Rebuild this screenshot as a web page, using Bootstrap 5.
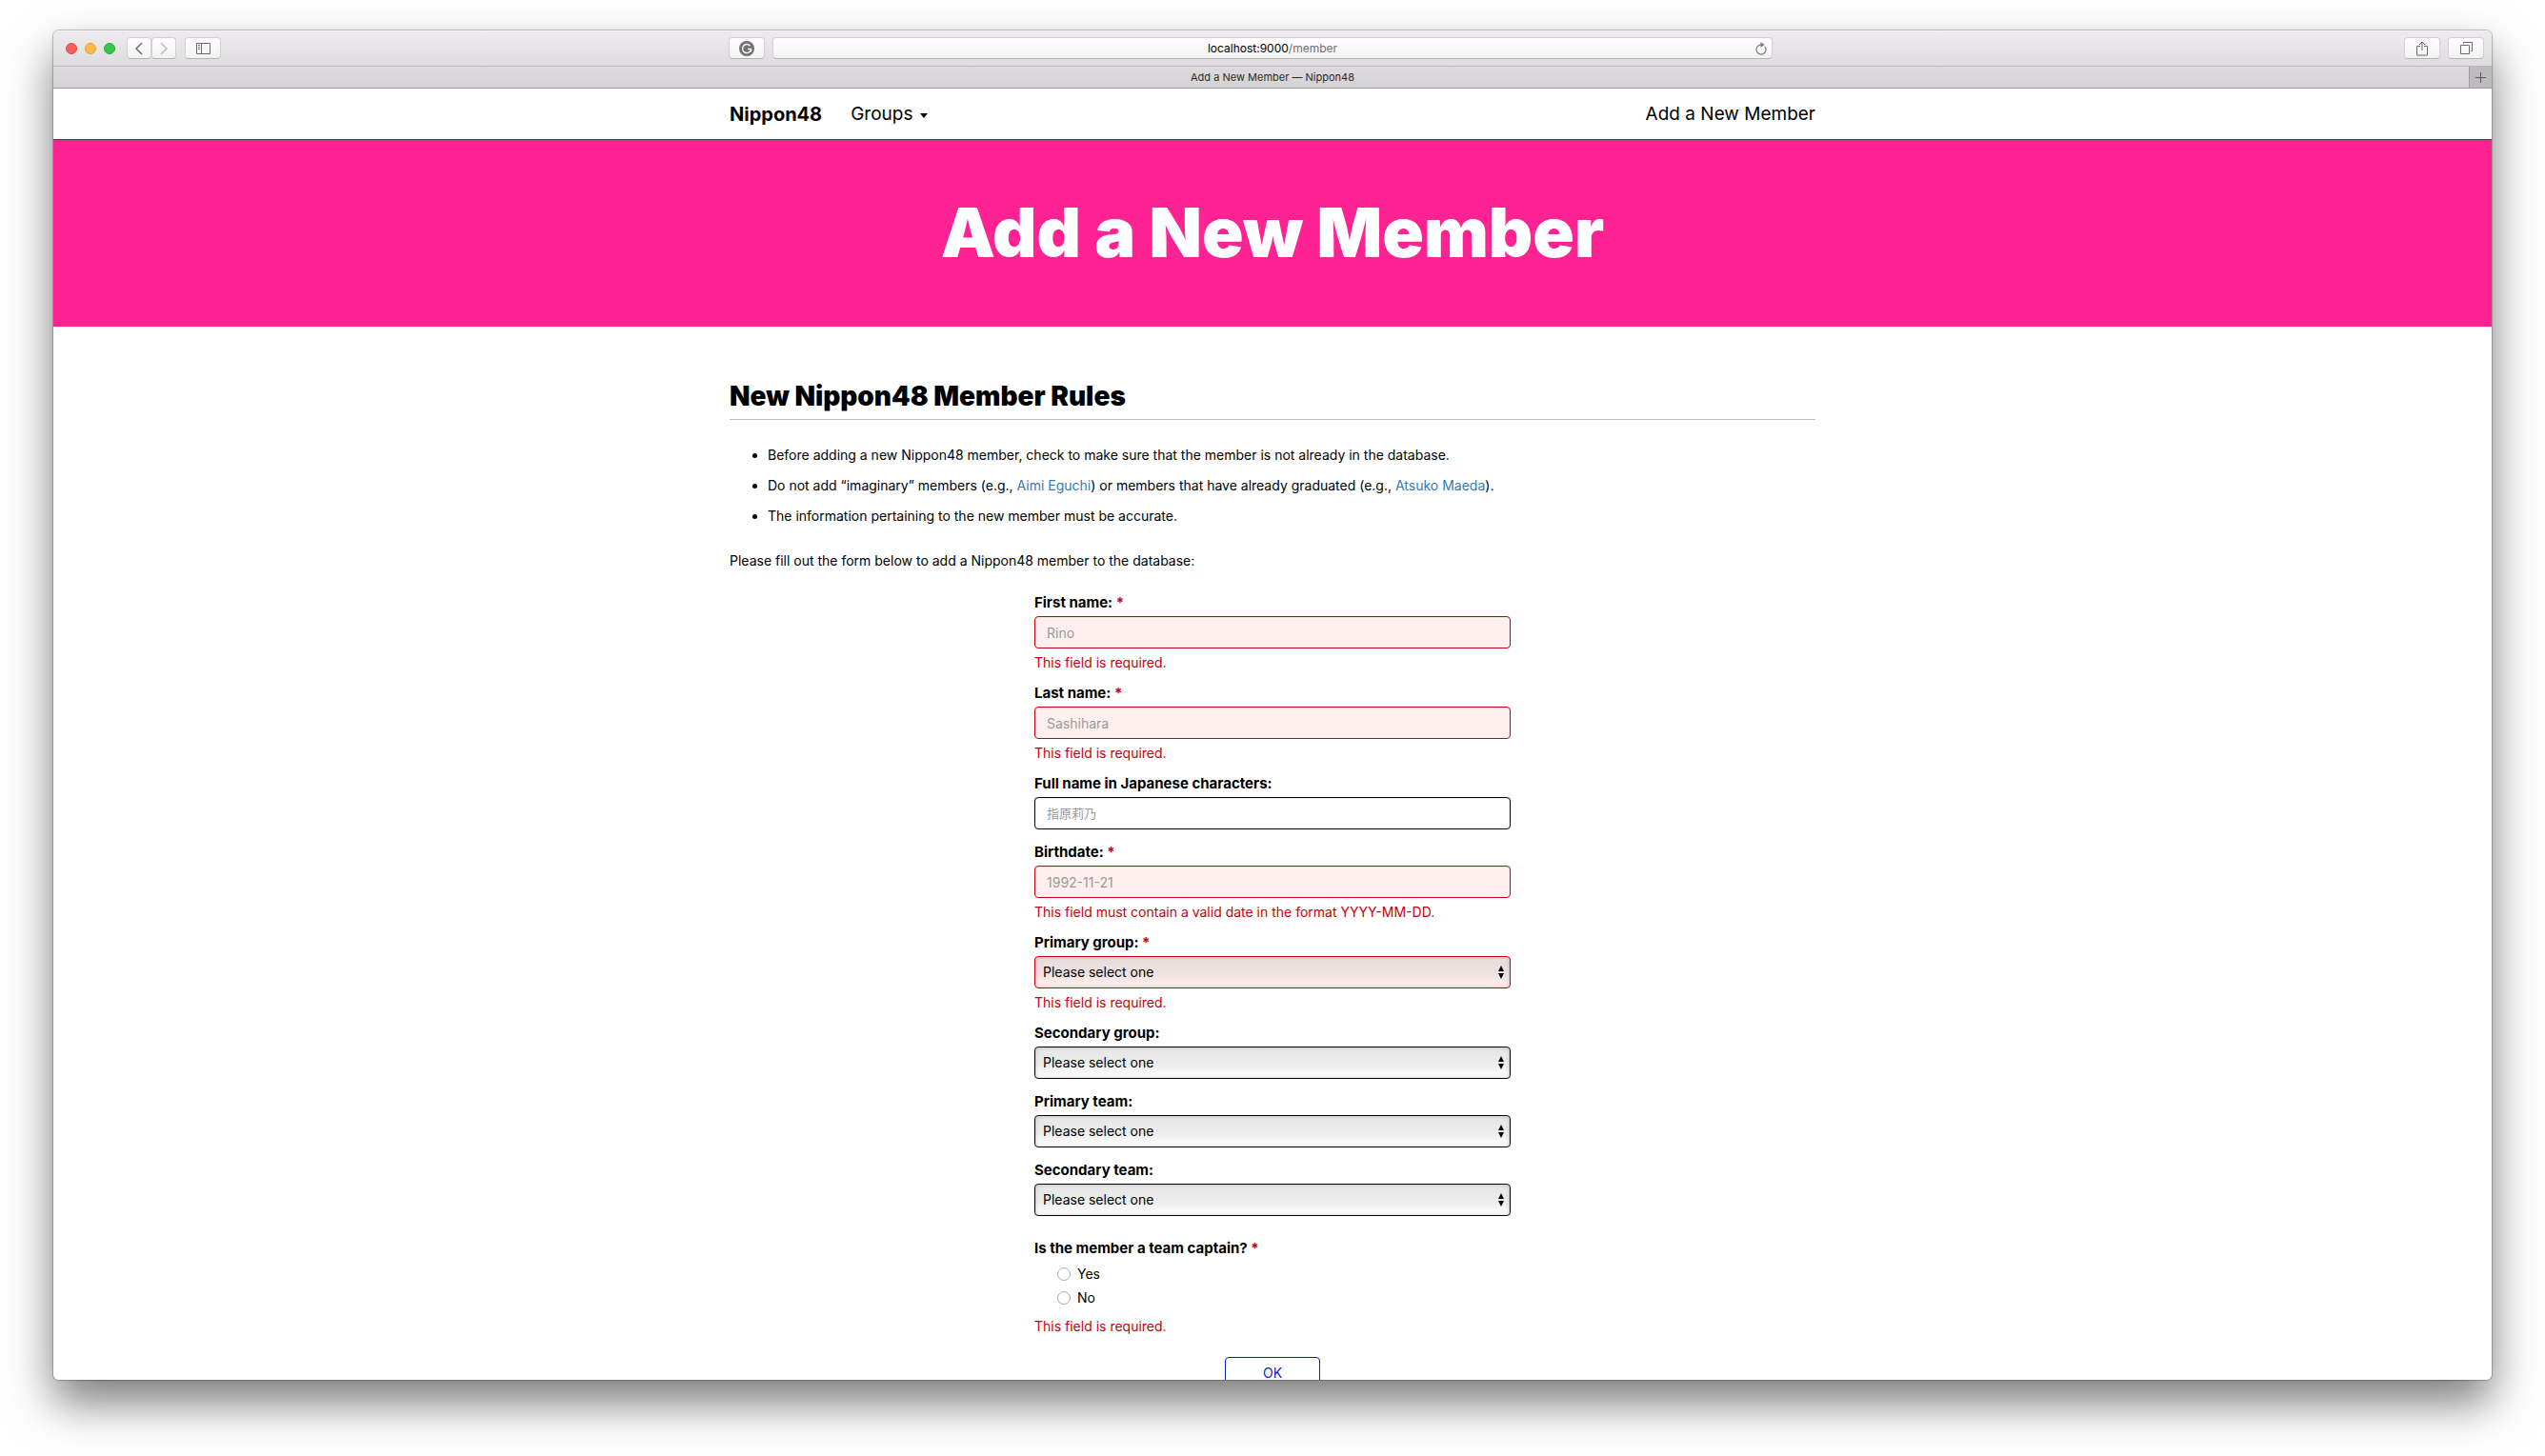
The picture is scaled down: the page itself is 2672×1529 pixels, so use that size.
<!DOCTYPE html>
<html lang="en">
<head>
<meta charset="utf-8">
<meta name="viewport" content="width=device-width, initial-scale=1">
<title>Add a New Member — Nippon48</title>
<link href="https://cdn.jsdelivr.net/npm/bootstrap@5.3.0/dist/css/bootstrap.min.css" rel="stylesheet">
<style>
  body { font-family: Inter, "Noto Sans CJK JP", sans-serif; font-size: 14px; line-height: 20px; color: #000; background: #fff; padding: 32px 56px 80px; }
  .browser { border-radius: 6px; box-shadow: 0 0 1px 1px rgba(0,0,0,.25), 0 24px 48px rgba(0,0,0,.52); }
  .toolbar { height: 38px; padding: 0 8px; background: linear-gradient(#edebee, #dedcdf); border-bottom: 1px solid #b9b7ba; box-shadow: inset 0 1px #f6f5f7; }
  .toolbar-start { padding-left: 5px; }
  .light { width: 12px; height: 12px; border: 1px solid; }
  .light-close { background: #fc605b; border-color: #df4744; }
  .light-min { background: #fdbc40; border-color: #de9f34; }
  .light-max { background: #34c84a; border-color: #27aa35; }
  .history { margin: 0 9px 0 12px; }
  .tool { height: 23px; width: 38px; border: 1px solid #d2d0d3; border-bottom-color: #b5b3b6; border-radius: 4px; background: linear-gradient(#fff, #f2f2f2); color: #6a6a6a; }
  .tool-sm { width: 26px; }
  .address { flex: 0 0 41.3%; height: 23px; font-size: 12px; border: 1px solid #d2d0d3; border-bottom-color: #b5b3b6; border-radius: 4px; background: linear-gradient(#fff, #f2f2f2); }
  .address-path { color: #6f6f6f; }
  .reload { right: 4px; color: #7a7a7a; }
  .tabstrip { height: 23px; font-size: 11px; background: linear-gradient(#dcdadd, #d5d3d6); border-bottom: 1px solid #9d9b9e; color: #2a2a2a; }
  .tab-title { padding-left: 24px; }
  .new-tab { width: 24px; background: #bdbbbe; border: 0; border-left: 1px solid #9d9b9e; color: #5a5a5a; }
  .viewport { min-height: 0; overflow-y: auto; scrollbar-width: none; }
  .viewport::-webkit-scrollbar { display: none; }
  .page { max-width: 1140px; margin: 0 auto; }
  .site-nav { height: 54px; border-bottom: 1px solid #454545; font-size: 19px; line-height: 24px; }
  .site-nav a { color: #000; text-decoration: none; }
  .site-nav .brand { font-size: 20px; }
  .nav-gap { margin-left: 30px; }
  .groups-toggle::after { margin-left: 8px; border-top-width: 5px; border-left-width: 4px; border-right-width: 4px; vertical-align: 2px; }
  .hero { height: 196px; background: #ff2292; color: #fff; font-weight: 900; font-size: 72px; line-height: 194px; margin: 0; }
  .rules-title { font-weight: 900; font-size: 28px; line-height: 34px; padding-bottom: 7px; margin: 56px 0 21px; border-bottom: 1px solid #bdbdbd; }
  .rules { padding-left: 40px; margin-bottom: 21px; line-height: 32px; }
  .rules a { color: #337ab7; text-decoration: none; }
  .member-form { max-width: 500px; margin: 24px auto 0; }
  .field { margin-bottom: 14px; }
  .field-bad { margin-bottom: 12px; }
  .field-label { display: block; font-weight: 700; margin-bottom: 4px; font-size: 15px; float: none; line-height: 20px; }
  .req, .error { color: #c5000f; }
  .error { margin: 5px 0 0; }
  .form-control, .form-select { height: 34px; border: 1px solid #000; border-radius: 4px; font-size: 14px; line-height: 20px; padding: 6px 12px; color: #000; box-shadow: inset 0 1px 1px rgba(0,0,0,.075); }
  .form-control::placeholder { color: #999; }
  .form-control:lang(ja) { font-size: 13px; }
  .form-select { padding: 6px 8px; background: url("data:image/svg+xml,%3Csvg xmlns='http://www.w3.org/2000/svg' width='8' height='14'%3E%3Cpath d='M1 6L4 0L7 6ZM1 8L4 14L7 8Z'/%3E%3C/svg%3E") no-repeat right 5px center, linear-gradient(#e6e6e6, #ececec 55%, #fff); background-size: 8px 14px, auto; box-shadow: inset 0 0 4px rgba(0,0,0,.2); }
  .field-bad .form-control { background: #ffefee; border-color: #c5000f; }
  .field-bad .form-select { border-color: #c5000f; background-image: url("data:image/svg+xml,%3Csvg xmlns='http://www.w3.org/2000/svg' width='8' height='14'%3E%3Cpath d='M1 6L4 0L7 6ZM1 8L4 14L7 8Z'/%3E%3C/svg%3E"), linear-gradient(#e8dedd, #eee1e0 55%, #fff2f1); }
  .captain { margin-top: 24px; }
  .choices { padding-left: 24px; }
  .choice { height: 25px; }
  .choice input { appearance: none; width: 14px; height: 14px; margin: 0 7px 0 0; border: 1px solid #aaa; border-radius: 50%; background: #fff; }
  .choice input:checked { background: #0a1fc4; }
  .choices-error { margin-top: 8px; }
  .ok-btn { width: 100px; height: 34px; border: 1px solid #0a1fc4; border-radius: 4px; background: #fff; color: #0a1fc4; margin: 22px auto 40px; }
</style>
</head>
<body class="d-flex flex-column vh-100">
<div class="browser d-flex flex-column flex-grow-1 overflow-hidden">
  <div class="toolbar d-flex align-items-center flex-shrink-0">
    <div class="toolbar-start d-flex align-items-center flex-fill w-25">
      <div class="d-flex gap-2">
        <span class="light light-close rounded-circle"></span>
        <span class="light light-min rounded-circle"></span>
        <span class="light light-max rounded-circle"></span>
      </div>
      <div class="history d-flex">
        <button class="tool tool-sm d-flex align-items-center justify-content-center p-0" type="button" aria-label="Back"><svg width="8" height="14" viewBox="0 0 8 14" fill="none" stroke="currentColor" stroke-width="1.5"><path d="M7 1L1 7l6 6"/></svg></button>
        <button class="tool tool-sm d-flex align-items-center justify-content-center p-0" type="button" aria-label="Forward"><svg width="8" height="14" viewBox="0 0 8 14" fill="none" stroke="#bcbcbc" stroke-width="1.5"><path d="M1 1l6 6-6 6"/></svg></button>
      </div>
      <button class="tool d-flex align-items-center justify-content-center p-0" type="button" aria-label="Sidebar"><svg width="15" height="12" viewBox="0 0 15 12" fill="none" stroke="currentColor"><path d="M.5.5h14v11H.5zM5.500.5v11M2 2.500h2M2 4.500h2M2 6.500h2"/></svg></button>
      <button class="tool d-flex align-items-center justify-content-center p-0 ms-auto me-2" type="button" aria-label="Grammar check"><svg width="16" height="16" viewBox="0 0 16 16" fill="none"><circle cx="8" cy="8" r="8" fill="#727272"/><path d="M11.500 5.200A4.500 4.500 0 1 0 12.500 8.500H9M12.500 8.500v3" stroke="#f8f8f8" stroke-width="1.400"/></svg></button>
    </div>
    <div class="address position-relative d-flex align-items-center justify-content-center">
      <span>localhost:9000<span class="address-path">/member</span></span>
      <button class="reload position-absolute btn p-0 border-0 lh-1 d-flex" type="button" aria-label="Reload"><svg width="14" height="14" viewBox="0 0 14 14" fill="none" stroke="currentColor" stroke-width="1.200"><path d="M10.800 4.800A5 5 0 1 1 7 3"/><path d="M6.500 0l4 3-4 3z" fill="currentColor" stroke="none"/></svg></button>
    </div>
    <div class="d-flex align-items-center justify-content-end flex-fill w-25">
      <button class="tool d-flex align-items-center justify-content-center p-0 me-2" type="button" aria-label="Share"><svg width="12" height="16" viewBox="0 0 12 16" fill="none" stroke="currentColor"><path d="M4 5.500H.5v9.500h11V5.500H8M6 10V1M3 4l3-3 3 3"/></svg></button>
      <button class="tool d-flex align-items-center justify-content-center p-0" type="button" aria-label="Show all tabs"><svg width="13" height="13" viewBox="0 0 13 13" fill="none" stroke="currentColor"><path d="M.5 3.500h9v9h-9zM3.500 2V.5h9v9H11"/></svg></button>
    </div>
  </div>
  <div class="tabstrip d-flex flex-shrink-0">
    <div class="tab-title flex-grow-1 d-flex align-items-center justify-content-center">Add a New Member — Nippon48</div>
    <button class="new-tab d-flex align-items-center justify-content-center p-0" type="button" aria-label="New tab"><svg width="11" height="11" viewBox="0 0 11 11" stroke="currentColor"><path d="M5.500 0v11M0 5.500h11"/></svg></button>
  </div>
  <div class="viewport flex-grow-1 bg-white">
    <nav class="site-nav">
      <div class="page d-flex align-items-center h-100">
        <a href="#" class="brand fw-bold">Nippon48</a>
        <a href="#" class="nav-gap dropdown-toggle groups-toggle" data-bs-toggle="dropdown">Groups</a>
        <a href="#" class="ms-auto">Add a New Member</a>
      </div>
    </nav>
    <h1 class="hero text-center">Add a New Member</h1>
    <main class="page">
      <h2 class="rules-title">New Nippon48 Member Rules</h2>
      <ul class="rules">
        <li>Before adding a new Nippon48 member, check to make sure that the member is not already in the database.</li>
        <li>Do not add “imaginary” members (e.g., <a href="#">Aimi Eguchi</a>) or members that have already graduated (e.g., <a href="#">Atsuko Maeda</a>).</li>
        <li>The information pertaining to the new member must be accurate.</li>
      </ul>
      <p class="mb-0">Please fill out the form below to add a Nippon48 member to the database:</p>
      <form class="member-form">
        <div class="field field-bad">
          <label class="field-label" for="first">First name: <span class="req">*</span></label>
          <input class="form-control" id="first" type="text" placeholder="Rino">
          <p class="error">This field is required.</p>
        </div>
        <div class="field field-bad">
          <label class="field-label" for="last">Last name: <span class="req">*</span></label>
          <input class="form-control" id="last" type="text" placeholder="Sashihara">
          <p class="error">This field is required.</p>
        </div>
        <div class="field">
          <label class="field-label" for="japanese">Full name in Japanese characters:</label>
          <input class="form-control" id="japanese" type="text" lang="ja" placeholder="指原莉乃">
        </div>
        <div class="field field-bad">
          <label class="field-label" for="birth">Birthdate: <span class="req">*</span></label>
          <input class="form-control" id="birth" type="text" placeholder="1992-11-21">
          <p class="error">This field must contain a valid date in the format YYYY-MM-DD.</p>
        </div>
        <div class="field field-bad">
          <label class="field-label" for="group1">Primary group: <span class="req">*</span></label>
          <select class="form-select" id="group1"><option>Please select one</option></select>
          <p class="error">This field is required.</p>
        </div>
        <div class="field">
          <label class="field-label" for="group2">Secondary group:</label>
          <select class="form-select" id="group2"><option>Please select one</option></select>
        </div>
        <div class="field">
          <label class="field-label" for="team1">Primary team:</label>
          <select class="form-select" id="team1"><option>Please select one</option></select>
        </div>
        <div class="field">
          <label class="field-label" for="team2">Secondary team:</label>
          <select class="form-select" id="team2"><option>Please select one</option></select>
        </div>
        <fieldset class="captain">
          <legend class="field-label">Is the member a team captain? <span class="req">*</span></legend>
          <div class="choices">
            <div class="choice d-flex align-items-center"><input type="radio" name="captain" id="yes"><label for="yes">Yes</label></div>
            <div class="choice d-flex align-items-center"><input type="radio" name="captain" id="no"><label for="no">No</label></div>
          </div>
          <p class="error choices-error">This field is required.</p>
        </fieldset>
        <button class="ok-btn d-block" type="submit">OK</button>
      </form>
    </main>
  </div>
</div>
<script src="https://cdn.jsdelivr.net/npm/bootstrap@5.3.0/dist/js/bootstrap.bundle.min.js"></script>
</body>
</html>
